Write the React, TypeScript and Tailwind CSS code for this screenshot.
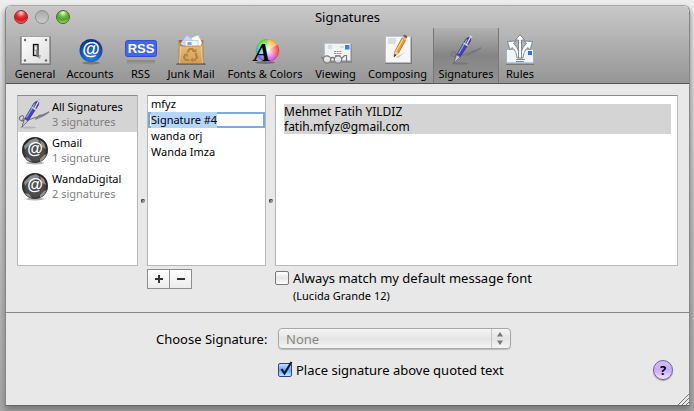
import { useState } from "react";
import type { ReactNode } from "react";

function GeneralIcon() {
  return (
    <svg viewBox="0 0 32 32" className="h-8 w-8" aria-hidden="true">
      <defs>
        <linearGradient id="plate" x1="0" y1="0" x2="1" y2="1">
          <stop offset="0" stopColor="#ffffff" />
          <stop offset="1" stopColor="#dedede" />
        </linearGradient>
      </defs>
      <rect x="1" y="2" width="31" height="29" rx="1" fill="#000" opacity=".25" />
      <rect x="2.500" y="2.500" width="28" height="27" fill="url(#plate)" stroke="#a2a2a2" />
      <circle cx="6" cy="6" r="1.200" fill="#6c6c6c" />
      <circle cx="27" cy="6" r="1.200" fill="#6c6c6c" />
      <circle cx="6" cy="26.500" r="1.200" fill="#6c6c6c" />
      <circle cx="27" cy="26.500" r="1.200" fill="#6c6c6c" />
      <path d="M16 21h6l-1 4-3-2z" fill="#aaa" />
      <rect x="14.500" y="10.500" width="4.500" height="11" fill="#ddd" stroke="#111" strokeWidth="1.300" />
      <rect x="15.500" y="12" width="2.500" height="4" fill="#fff" stroke="#666" strokeWidth=".5" />
      <path d="M18.500 16v7" stroke="#777" strokeWidth="2.500" />
    </svg>
  );
}

function AccountsIcon() {
  return (
    <svg viewBox="0 0 32 32" className="h-8 w-8 overflow-visible" aria-hidden="true">
      <defs>
        <radialGradient id="blueBall" cx=".5" cy=".75" r=".8">
          <stop offset="0" stopColor="#2f86e0" />
          <stop offset=".5" stopColor="#1557b4" />
          <stop offset="1" stopColor="#0b2d80" />
        </radialGradient>
      </defs>
      <ellipse cx="17" cy="29" rx="9" ry="1.500" fill="#000" opacity=".25" />
      <circle cx="17" cy="16.500" r="11.500" fill="url(#blueBall)" />
      <text x="17" y="21" textAnchor="middle" fontSize="18" fontWeight="700" fontFamily="Liberation Sans, sans-serif" fill="#fff">@</text>
    </svg>
  );
}

function RssIcon() {
  return (
    <svg viewBox="0 0 32 32" className="h-8 w-8" aria-hidden="true">
      <defs>
        <linearGradient id="rssShade" x1="0" y1="0" x2="0" y2="1">
          <stop offset="0" stopColor="#777" stopOpacity=".7" />
          <stop offset="1" stopColor="#777" stopOpacity="0" />
        </linearGradient>
      </defs>
      <rect x="2" y="26" width="28" height="5" fill="url(#rssShade)" />
      <rect x=".5" y="6.500" width="31" height="16" rx="2" fill="#4167ea" stroke="#3450cb" />
      <text x="16" y="19" textAnchor="middle" fontSize="13" fontWeight="700" fontFamily="Liberation Sans, sans-serif" fill="#fff">RSS</text>
    </svg>
  );
}

function JunkIcon() {
  return (
    <svg viewBox="0 0 32 32" className="h-8 w-8" aria-hidden="true">
      <defs>
        <linearGradient id="bag" x1="0" y1="0" x2="0" y2="1">
          <stop offset="0" stopColor="#c98d3e" />
          <stop offset=".3" stopColor="#e8b973" />
          <stop offset="1" stopColor="#d39c50" />
        </linearGradient>
      </defs>
      <path d="M2 29h28l1 2H1z" fill="#000" opacity=".35" />
      <path d="M4 6h24v10H4z" fill="#9a6526" />
      <path d="M5 10l7-9 7 6-5 8z" fill="#c9d9f5" stroke="#9fb3d4" strokeWidth=".5" />
      <path d="M16 4l7-3 5 9-5 5z" fill="#fff" stroke="#bbb" strokeWidth=".5" />
      <rect x="10" y="6.500" width="13" height="8" fill="#f4f8ff" stroke="#a9b9d8" strokeWidth=".6" />
      <rect x="12.500" y="8" width="4" height="3" fill="#7ba4ea" />
      <path d="M4 6l2 6h20l2-6v23.500H4z" fill="url(#bag)" stroke="#a87030" strokeWidth=".6" />
      <path d="M6 12l-1.500 17M26 12l1.500 17" stroke="#f3d09a" strokeWidth=".8" />
      <g fill="none" stroke="#b58443" strokeWidth="2.200">
        <path d="M12.500 18.500l2-3.500h3l1.500 3" />
        <path d="M20.500 19l1.500 4-2 3h-3" />
        <path d="M14 26h-3.500L9 23l2-3" />
      </g>
      <path d="M17 18h4.500v-3.500zM18 23.500v5l-3-2.500zM8.500 20.500l4-1.500 .5 4z" fill="#b58443" />
    </svg>
  );
}

function FontsIcon() {
  return (
    <svg viewBox="0 0 32 32" className="h-8 w-8 overflow-visible" aria-hidden="true">
      <defs>
        <radialGradient id="wheelCore">
          <stop offset="0" stopColor="#fff" />
          <stop offset="1" stopColor="#fff" stopOpacity="0" />
        </radialGradient>
      </defs>
      <ellipse cx="16" cy="28.500" rx="10" ry="1.500" fill="#000" opacity=".3" />
      <path d="M18.500 16.500V5A11.500 11.500 0 0 1 28.500 10.700z" fill="#ffb84a" />
      <path d="M18.500 16.500L28.500 10.700A11.500 11.500 0 0 1 28.500 22.300z" fill="#ff4a55" />
      <path d="M18.500 16.500L28.500 22.300A11.500 11.500 0 0 1 18.500 28z" fill="#e04ad0" />
      <path d="M18.500 16.500V28A11.500 11.500 0 0 1 8.500 22.300z" fill="#6b63ee" />
      <path d="M18.500 16.500L8.500 22.300A11.500 11.500 0 0 1 8.500 10.700z" fill="#2bc7e2" />
      <path d="M18.500 16.500L8.500 10.700A11.500 11.500 0 0 1 18.500 5z" fill="#5ce33c" />
      <circle cx="18.500" cy="16.500" r="11" fill="url(#wheelCore)" />
      <circle cx="18.500" cy="16.500" r="11.200" fill="none" stroke="#555" strokeOpacity=".35" strokeWidth=".6" />
      <text x="13" y="27" textAnchor="middle" fontSize="25" fontWeight="700" fontStyle="italic" fontFamily="Liberation Serif, serif" fill="#000">A</text>
    </svg>
  );
}

function ViewingIcon() {
  return (
    <svg viewBox="0 0 32 32" className="h-8 w-8" aria-hidden="true">
      <rect x="4" y="10" width="28" height="19" fill="#000" opacity=".15" />
      <rect x="4.500" y="9.500" width="26" height="17" fill="#f1f3f5" stroke="#b9c1cb" strokeWidth=".7" />
      <rect x="25" y="11" width="4.500" height="4.500" fill="#3e7df0" />
      <path d="M8 12h4M8 14h4M20 13h4" stroke="#c3c7cc" />
      <path d="M14 17.500h8M14 19.500h8M15 21.500h6" stroke="#8b8f94" strokeDasharray="2 .7" />
      <circle cx="7" cy="25.500" r="3.700" fill="#e6e6e6" fillOpacity=".8" stroke="#7a7a7a" strokeWidth="1.200" />
      <circle cx="18" cy="25.500" r="3.700" fill="#e6e6e6" fillOpacity=".8" stroke="#7a7a7a" strokeWidth="1.200" />
      <path d="M10.500 24.500q2-2 4 0M3 24.500l-1.500-1.500M21.500 24.500l3-3h2v6" fill="none" stroke="#777" strokeWidth="1.200" />
    </svg>
  );
}

function ComposingIcon() {
  return (
    <svg viewBox="0 0 32 32" className="h-8 w-8" aria-hidden="true">
      <rect x="3" y="3" width="27" height="27" fill="#000" opacity=".25" />
      <rect x="3.500" y="2.500" width="25" height="26" fill="#f7f7f7" stroke="#b8bfc8" strokeWidth=".7" />
      <path d="M6 5h8M6 7h8M6 9h7" stroke="#c1c5ca" />
      <path d="M14 23l10-5-8 6z" fill="#999" opacity=".5" />
      <path d="M12 23l1-6L20 4l3.500 2.500L16.500 19z" fill="#eda12c" stroke="#7b531a" strokeWidth=".6" />
      <path d="M13.800 17.500L21 5" stroke="#ffd679" strokeWidth="1.200" />
      <path d="M12 23l1-6 3.500 2z" fill="#efd2a4" />
      <path d="M12 23l.6-3 1.600 1z" fill="#111" />
      <path d="M20 4l1-2 3.500 2.500-1 2z" fill="#b8bcc0" />
      <path d="M21 2q1-2 3-.8t.5 3.300z" fill="#c23a2d" />
    </svg>
  );
}

function PenIcon() {
  return (
    <svg viewBox="0 0 32 32" className="h-8 w-8" aria-hidden="true">
      <ellipse cx="10" cy="29.500" rx="8" ry="1" fill="#000" opacity=".15" />
      <path d="M7 22C1 24 0 20 3 18s4 3 0 5c7 0 12-3 16-4 6-2 8-3 12-5-5 4-8 5-13 7 3-5 5-4 6-4" fill="none" stroke="#777" strokeWidth="1.100" />
      <path d="M4 29l2.500-8L16 5l5-3.500-.5 5.500L10 23z" fill="#4343b5" stroke="#29297c" strokeWidth=".6" />
      <path d="M8.500 19.500L17 5.500" stroke="#9d9df0" strokeWidth="1.400" />
      <path d="M4 29l2.500-8 3.500 2z" fill="#c9c9d4" stroke="#666" strokeWidth=".5" />
      <path d="M13.500 9l4.500 2.500" stroke="#d9d9e8" strokeWidth="1.300" />
      <path d="M20 4L16 11.500" stroke="#e7e7f2" strokeWidth="1.200" />
      <path d="M18.500 3l2-2 2 1.500-1 2z" fill="#cfcfdd" />
    </svg>
  );
}

function RulesIcon() {
  return (
    <svg viewBox="0 0 32 32" className="h-8 w-8" aria-hidden="true">
      <rect x="2" y="16" width="28" height="15" fill="#000" opacity=".25" />
      <rect x="2.500" y="15.500" width="27" height="14" fill="#f1f4f8" stroke="#9eb0c4" strokeWidth=".7" />
      <path d="M2.500 29h27" stroke="#7fa0c6" />
      <rect x="24" y="17" width="4" height="4" fill="#2f6cf0" />
      <path d="M12 25.500h9M12 27.500h8" stroke="#888" />
      <g fill="#fff" stroke="#66727f" strokeWidth=".8" strokeLinejoin="round">
        <path d="M13 24C12.500 18 10 15 8 13.500L6 16 3.500 7.500l8-.5-2 2.500C13.500 13 15 17 15.500 24z" />
        <path d="M19 24c.5-6 3-9 5-10.500l2 2.500 2.500-8.500-8-.5 2 2.500C18.500 13 17 17 16.500 24z" />
        <path d="M14.500 24V6H11.500L16 .7 20.500 6H17.500v18z" />
      </g>
    </svg>
  );
}

function GlobeIcon() {
  return (
    <svg viewBox="0 0 32 32" className="h-8 w-8 overflow-visible" aria-hidden="true">
      <defs>
        <radialGradient id="globe" cx=".5" cy=".55" r=".5">
          <stop offset="0" stopColor="#555" />
          <stop offset=".7" stopColor="#4a4a4a" />
          <stop offset="1" stopColor="#222" />
        </radialGradient>
      </defs>
      <ellipse cx="17" cy="29" rx="9" ry="1.500" fill="#000" opacity=".3" />
      <circle cx="17" cy="16" r="13" fill="url(#globe)" />
      <path d="M6 12l6-6 6-2 4 3-5 2-2 2-5 1-3 4zM22 6l4 3 2 6-4-2zM22 25l4-4 3-1-3 5-4 3zM7 23l4 1 3 4-5-2z" fill="#aaa" opacity=".75" />
      <text x="17" y="20" textAnchor="middle" fontSize="16" fontWeight="700" fontFamily="Liberation Sans, sans-serif" fill="#fff">@</text>
    </svg>
  );
}

const tabs: { label: string; width: string; icon: ReactNode }[] = [
  { label: "General", width: "w-[50px]", icon: <GeneralIcon /> },
  { label: "Accounts", width: "w-[60px]", icon: <AccountsIcon /> },
  { label: "RSS", width: "w-[41px]", icon: <RssIcon /> },
  { label: "Junk Mail", width: "w-[60px]", icon: <JunkIcon /> },
  { label: "Fonts & Colors", width: "w-[88px]", icon: <FontsIcon /> },
  { label: "Viewing", width: "w-[53px]", icon: <ViewingIcon /> },
  { label: "Composing", width: "w-[71px]", icon: <ComposingIcon /> },
  { label: "Signatures", width: "w-[66px]", icon: <PenIcon /> },
  { label: "Rules", width: "w-[42px]", icon: <RulesIcon /> },
];

const accounts = [
  { name: "All Signatures", count: "3 signatures", icon: <PenIcon /> },
  { name: "Gmail", count: "1 signature", icon: <GlobeIcon /> },
  { name: "WandaDigital", count: "2 signatures", icon: <GlobeIcon /> },
];

function Splitter({ width }: { width: string }) {
  return (
    <div className={`${width} flex shrink-0 items-center justify-center pt-10`}>
      <span className="h-1 w-1 rounded-full border-t border-l border-[#333] bg-[#999]" />
    </div>
  );
}

function App() {
  const [active, setActive] = useState("Signatures");
  const [account, setAccount] = useState("All Signatures");
  const [name, setName] = useState("Signature #4");
  const [body, setBody] = useState("Mehmet Fatih YILDIZ\nfatih.mfyz@gmail.com");
  const [matchFont, setMatchFont] = useState(false);
  const [above, setAbove] = useState(true);

  return (
    <div className="flex min-h-screen flex-col bg-linear-to-b from-[#eeeeee] via-[#c4c4c4] to-[#a6a6a6] px-1 pt-[5px] pb-[5px] pl-[5px] font-['Lucida_Grande','Noto_Sans',sans-serif] text-[13px] leading-4 text-black">
      <div className="flex flex-1 flex-col rounded-t-md border border-[#868686] border-t-[#a8a8a8] border-b-[#666666] bg-[#e8e8e8] shadow-[0_4px_6px_#777777]">
        <header className="rounded-t-md border-b border-[#555555] bg-linear-to-b from-[#c8c8c8] to-[#969696]">
          <div className="grid h-[22px] grid-cols-[1fr_auto_1fr] items-center px-2">
            <div className="flex gap-[7px]">
              <button aria-label="Close" className="h-[14px] w-[14px] rounded-full border border-[#8b2a2a] bg-[radial-gradient(circle_at_50%_15%,#ffd5d5_0%,#e83a40_35%,#d3131e_60%,#ff8a80_100%)]" />
              <button aria-label="Minimize" className="h-[14px] w-[14px] rounded-full border border-[#8e8e8e] bg-linear-to-b from-[#a9a9a9] to-[#cccccc]" />
              <button aria-label="Zoom" className="h-[14px] w-[14px] rounded-full border border-[#3f6b25] bg-[radial-gradient(circle_at_50%_15%,#e9ffd9_0%,#72b840_35%,#56a026_60%,#c0f788_100%)]" />
            </div>
            <h1 className="text-[13px]">Signatures</h1>
          </div>
          <nav className="flex pl-1">
            {tabs.map((tab) => (
              <button
                key={tab.label}
                onClick={() => setActive(tab.label)}
                className={`${tab.width} flex h-[55px] shrink-0 flex-col items-center border-x pt-[6px] text-[11px] leading-4 whitespace-nowrap ${
                  active === tab.label
                    ? "border-[#777777] bg-linear-to-b from-[#b2b2b2] via-[#858585] to-[#929292]"
                    : "border-transparent"
                }`}
              >
                {tab.icon}
                {tab.label}
              </button>
            ))}
          </nav>
        </header>

        <main className="px-[11px] pt-[11px] pb-2">
          <div className="flex">
            <ul className="h-[171px] w-[121px] shrink-0 border border-t-[#8c8c8c] border-[#b8b8b8] bg-white">
              {accounts.map((item) => (
                <li key={item.name}>
                  <button
                    onClick={() => setAccount(item.name)}
                    className={`flex h-9 w-full items-center gap-[2px] text-left text-[11px] leading-[15px] whitespace-nowrap ${
                      account === item.name ? "bg-[#d4d4d4]" : ""
                    }`}
                  >
                    {item.icon}
                    <span className="flex flex-col">
                      <span>{item.name}</span>
                      <span className="text-[#7f7f7f]">{item.count}</span>
                    </span>
                  </button>
                </li>
              ))}
            </ul>
            <Splitter width="w-[9px]" />
            <ul className="h-[171px] w-[119px] shrink-0 border border-t-[#8c8c8c] border-[#b8b8b8] bg-white text-[11px] leading-4">
              <li className="px-[3px]">mfyz</li>
              <li className="flex h-4 bg-white pl-[3px] ring-2 ring-[#7ba9e2] ring-inset">
                <input
                  aria-label="Signature name"
                  value={name}
                  onChange={(e) => setName(e.target.value)}
                  className="field-sizing-content bg-[#b4d5fe] outline-none"
                />
              </li>
              <li className="px-[3px]">wanda orj</li>
              <li className="px-[3px]">Wanda Imza</li>
            </ul>
            <Splitter width="w-[9px]" />
            <div className="h-[171px] min-w-0 flex-1 border border-t-[#8c8c8c] border-[#b8b8b8] bg-white pt-2 pr-[6px] pl-2">
              <textarea
                aria-label="Signature text"
                rows={2}
                value={body}
                onChange={(e) => setBody(e.target.value)}
                className="block w-full resize-none overflow-hidden bg-[#d4d4d4] text-[12px] leading-[15px] outline-none"
              />
            </div>
          </div>
          <div className="flex pt-[3px]">
            <div className="flex w-[258px] shrink-0 pl-[130px]">
              <button aria-label="Add signature" className="flex h-5 w-[23px] items-center justify-center border border-[#8d8d8d] bg-linear-to-b from-white to-[#ececec]">
                <svg viewBox="0 0 8 8" className="h-2 w-2"><path d="M4 0v8M0 4h8" stroke="#333" strokeWidth="2" /></svg>
              </button>
              <button aria-label="Remove signature" className="flex h-5 w-[22px] items-center justify-center border border-l-0 border-[#8d8d8d] bg-linear-to-b from-white to-[#ececec]">
                <svg viewBox="0 0 8 8" className="h-2 w-2"><path d="M0 4h8" stroke="#333" strokeWidth="2" /></svg>
              </button>
            </div>
            <div className="flex gap-1 pt-[2px]">
              <input
                id="match-font"
                type="checkbox"
                checked={matchFont}
                onChange={(e) => setMatchFont(e.target.checked)}
                className="h-[14px] w-[14px] shrink-0 appearance-none rounded-xs border border-[#777777] bg-linear-to-b from-white via-[#e6e6e6] to-white checked:bg-[#69aef0]"
              />
              <label htmlFor="match-font" className="leading-[14px]">
                Always match my default message font
                <span className="block pt-[3px] text-[11px] leading-4">(Lucida Grande 12)</span>
              </label>
            </div>
          </div>
        </main>

        <footer className="flex flex-1 flex-col border-t border-[#868686] pt-[15px]">
          <div className="flex items-center pl-[150px]">
            <label htmlFor="choose" className="w-[122px] shrink-0">Choose Signature:</label>
            <div className="relative w-[233px]">
              <select
                id="choose"
                disabled
                className="block h-[21px] w-full appearance-none rounded border border-[#a8a8a8] bg-linear-to-b from-[#f5f5f5] via-[#e4e4e4] to-[#f4f4f4] pl-[7px] text-[13px] leading-4 text-[#858585] opacity-100 shadow-[0_1px_1px_#bbbbbb]"
              >
                <option>None</option>
              </select>
              <svg viewBox="0 0 20 21" className="pointer-events-none absolute top-0 right-0 h-[21px] w-5" aria-hidden="true">
                <path d="M.5 1v19" stroke="#c6c6c6" />
                <path d="M6 8.500L9 4l3 4.500zM6 12.500L9 17l3-4.500z" fill="#777" />
              </svg>
            </div>
          </div>
          <div className="flex items-center pt-[11px] pr-4 pl-[272px]">
            <span className="relative mr-1 h-[14px] w-[14px] shrink-0">
              <input
                id="above"
                type="checkbox"
                checked={above}
                onChange={(e) => setAbove(e.target.checked)}
                className="block h-[14px] w-[14px] appearance-none rounded-xs border border-[#777777] bg-white checked:border-[#34418c] checked:bg-linear-to-b checked:from-[#c0dcfa] checked:via-[#66a9f0] checked:to-[#aef0ff]"
              />
              {above && (
                <svg viewBox="0 0 16 16" className="pointer-events-none absolute -top-[2px] left-0 h-4 w-4" aria-hidden="true">
                  <path d="M3.500 8l3 4.500L13.500 1" fill="none" stroke="#111a30" strokeWidth="2.200" />
                </svg>
              )}
            </span>
            <label htmlFor="above">Place signature above quoted text</label>
            <button aria-label="Help" className="ml-auto flex h-5 w-5 items-center justify-center rounded-full border border-[#72619a] bg-linear-to-b from-[#d3bdf5] via-[#c9a9f8] to-[#f0e4ff] text-[13px] font-bold shadow-[0_1px_1px_#999999]">
              ?
            </button>
          </div>
          <svg viewBox="0 0 12 12" className="mt-auto ml-auto h-3 w-3" aria-hidden="true">
            <path d="M1 12L12 1M5 12l7-7M9 12l3-3" stroke="#777" />
          </svg>
        </footer>
      </div>
    </div>
  );
}

export default App;
